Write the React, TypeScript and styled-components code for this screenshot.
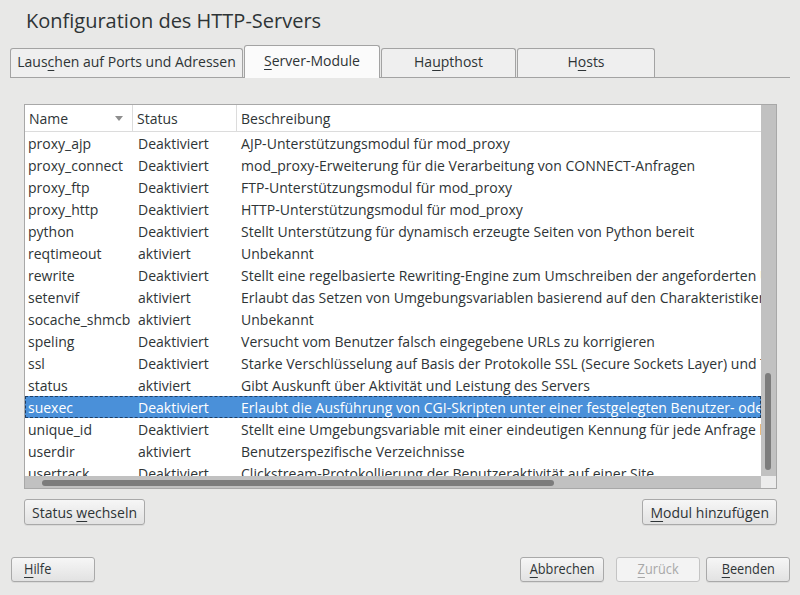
import React from "react";
import styled, { createGlobalStyle } from "styled-components";

const Global = createGlobalStyle`
  html, body { margin: 0; padding: 0; }
  body { font-family: "Open Sans", "Noto Sans", sans-serif; color: #2e3436; }
`;

const Page = styled.div`
  width: 800px;
  height: 595px;
  box-sizing: border-box;
  background: #e8e8e7;
  display: flex;
  flex-direction: column;
  overflow: hidden;
`;

const Title = styled.h1`
  margin: 0;
  padding: 8px 0 0 26px;
  height: 36px;
  box-sizing: border-box;
  font-size: 20px;
  line-height: 26px;
  font-weight: 400;
  color: #2e3436;
`;

const TabBar = styled.div`
  margin: 8px 10px 0 10px;
  height: 33px;
  display: flex;
  align-items: flex-end;
  border-bottom: 1px solid #a3a3a3;
`;

const Tab = styled.div<{ $active?: boolean; $w: number }>`
  width: ${(p) => p.$w}px;
  height: ${(p) => (p.$active ? 33 : 29)}px;
  box-sizing: border-box;
  border: 1px solid #a3a3a3;
  border-bottom: none;
  border-radius: 3px 3px 0 0;
  background: ${(p) => (p.$active ? "#fbfbfb" : "#efefef")};
  margin-bottom: ${(p) => (p.$active ? -1 : 0)}px;
  display: flex;
  align-items: center;
  justify-content: center;
  font-size: 14px;
  color: #2e3436;
  padding-bottom: ${(p) => (p.$active ? 4 : 3)}px;
  white-space: nowrap;
  & + & { margin-left: 1px; }
`;

const Mn = styled.span`
  text-decoration: underline;
  text-underline-offset: 3px;
  text-decoration-thickness: 1px;
`;

const Frame = styled.div`
  margin: 26px 23px 0 24px;
  height: 385px;
  box-sizing: border-box;
  border: 1px solid #a8a8a8;
  background: #ffffff;
  display: grid;
  grid-template-columns: 1fr 15px;
  grid-template-rows: 1fr 12px;
`;

const Viewport = styled.div`
  overflow: hidden;
  position: relative;
`;

const HeaderRow = styled.div`
  display: flex;
  height: 26px;
  border-bottom: 1px solid #dcdcdc;
  background: #fff;
`;

const HeaderCell = styled.div<{ $w?: number }>`
  ${(p) => (p.$w ? `width: ${p.$w}px;` : "flex: 1;")}
  flex-shrink: 0;
  box-sizing: border-box;
  padding-left: 4px;
  padding-right: 8px;
  display: flex;
  align-items: center;
  justify-content: space-between;
  font-size: 14px;
  border-right: ${(p) => (p.$w ? "1px solid #dcdcdc" : "none")};
`;

const SortArrow = styled.span`
  width: 0;
  height: 0;
  border-left: 4px solid transparent;
  border-right: 4px solid transparent;
  border-top: 5px solid #8e8e8e;
  margin-right: 1px;
`;

const Row = styled.div<{ $sel?: boolean }>`
  display: flex;
  height: 22px;
  align-items: center;
  white-space: nowrap;
  font-size: 14px;
  background: ${(p) => (p.$sel ? "#4a90d9" : "transparent")};
  color: ${(p) => (p.$sel ? "#ffffff" : "#2e3436")};
  outline: ${(p) => (p.$sel ? "1px dashed #1d3d63" : "none")};
  outline-offset: -1px;
`;

const Cell = styled.div<{ $w?: number; $pl: number; $ls?: number }>`
  ${(p) => (p.$w ? `width: ${p.$w}px;` : "")}
  flex-shrink: 0;
  box-sizing: border-box;
  padding-left: ${(p) => p.$pl}px;
  letter-spacing: ${(p) => p.$ls ?? 0}px;
`;

const VTrough = styled.div`
  background: #c1c1c1;
  grid-row: 1;
  grid-column: 2;
  position: relative;
`;

const VThumb = styled.div`
  position: absolute;
  left: 4px;
  width: 6px;
  top: 268px;
  height: 97px;
  border-radius: 3px;
  background: #7c7c7c;
`;

const HTrough = styled.div`
  background: #c1c1c1;
  position: relative;
`;

const HThumb = styled.div`
  position: absolute;
  top: 4px;
  height: 6px;
  left: 17px;
  width: 512px;
  border-radius: 3px;
  background: #7c7c7c;
`;

const Corner = styled.div`
  background: #ececec;
`;

const ActionRow = styled.div`
  display: flex;
  justify-content: space-between;
  margin: 10px 23px 0 24px;
`;

const Button = styled.button<{
  $w?: number;
  $h?: number;
  $disabled?: boolean;
  $start?: boolean;
}>`
  ${(p) => (p.$w ? `width: ${p.$w}px;` : "")}
  height: ${(p) => p.$h ?? 26}px;
  box-sizing: border-box;
  padding: ${(p) => (p.$start ? "0 0 0 12px" : "0 7px")};
  border: 1px solid ${(p) => (p.$disabled ? "#c4c4c4" : "#a9a9a9")};
  border-radius: 3px;
  background: ${(p) =>
    p.$disabled ? "#f3f3f3" : "linear-gradient(#f6f6f6, #e2e2e2)"};
  color: ${(p) => (p.$disabled ? "#a8a8a8" : "#2e3436")};
  font-family: "Open Sans", "Noto Sans", sans-serif;
  font-size: 14px;
  display: flex;
  align-items: center;
  justify-content: ${(p) => (p.$start ? "flex-start" : "center")};
  box-shadow: ${(p) => (p.$disabled ? "none" : "0 1px 0 rgba(0,0,0,0.06)")};
`;

const Label = styled.span`
  white-space: pre;
`;

const Narrow = styled.span`
  display: inline-block;
  font-size: 15px;
  line-height: 18px;
  margin-bottom: 3px;
  transform: scaleX(0.85);
  transform-origin: center;
  white-space: nowrap;
`;

const NarrowStart = styled(Narrow)`
  transform-origin: left center;
`;

const Footer = styled.div`
  margin-top: auto;
  padding: 0 10px 13px 11px;
  display: flex;
  align-items: center;
`;

const FooterRight = styled.div`
  margin-left: auto;
  display: flex;
  gap: 6px;
  & > :first-child { margin-right: 6px; }
`;

type Mod = [string, string, string];
const modules: Mod[] = [
  ["proxy_ajp", "Deaktiviert", "AJP-Unterstützungsmodul für mod_proxy"],
  ["proxy_connect", "Deaktiviert", "mod_proxy-Erweiterung für die Verarbeitung von CONNECT-Anfragen"],
  ["proxy_ftp", "Deaktiviert", "FTP-Unterstützungsmodul für mod_proxy"],
  ["proxy_http", "Deaktiviert", "HTTP-Unterstützungsmodul für mod_proxy"],
  ["python", "Deaktiviert", "Stellt Unterstützung für dynamisch erzeugte Seiten von Python bereit"],
  ["reqtimeout", "aktiviert", "Unbekannt"],
  ["rewrite", "Deaktiviert", "Stellt eine regelbasierte Rewriting-Engine zum Umschreiben der angeforderten URLs bereit"],
  ["setenvif", "aktiviert", "Erlaubt das Setzen von Umgebungsvariablen basierend auf den Charakteristiken der Anfrage"],
  ["socache_shmcb", "aktiviert", "Unbekannt"],
  ["speling", "Deaktiviert", "Versucht vom Benutzer falsch eingegebene URLs zu korrigieren"],
  ["ssl", "Deaktiviert", "Starke Verschlüsselung auf Basis der Protokolle SSL (Secure Sockets Layer) und TLS"],
  ["status", "aktiviert", "Gibt Auskunft über Aktivität und Leistung des Servers"],
  ["suexec", "Deaktiviert", "Erlaubt die Ausführung von CGI-Skripten unter einer festgelegten Benutzer- oder Gruppen-ID"],
  ["unique_id", "Deaktiviert", "Stellt eine Umgebungsvariable mit einer eindeutigen Kennung für jede Anfrage bereit"],
  ["userdir", "aktiviert", "Benutzerspezifische Verzeichnisse"],
  ["usertrack", "Deaktiviert", "Clickstream-Protokollierung der Benutzeraktivität auf einer Site"],
];

export default function App() {
  return (
    <Page>
      <Global />
      <Title>Konfiguration des HTTP-Servers</Title>
      <TabBar>
        <Tab $w={233}>
          <Label>
            Laus<Mn>c</Mn>hen auf Ports und Adressen
          </Label>
        </Tab>
        <Tab $w={136} $active>
          <Label>
            <Mn>S</Mn>erver-Module
          </Label>
        </Tab>
        <Tab $w={135}>
          <Label>
            Ha<Mn>u</Mn>pthost
          </Label>
        </Tab>
        <Tab $w={138}>
          <Label>
            H<Mn>o</Mn>sts
          </Label>
        </Tab>
      </TabBar>
      <Frame>
        <Viewport>
          <HeaderRow>
            <HeaderCell $w={108}>
              Name
              <SortArrow />
            </HeaderCell>
            <HeaderCell $w={104}>Status</HeaderCell>
            <HeaderCell>Beschreibung</HeaderCell>
          </HeaderRow>
          {modules.map(([n, s, d]) => (
            <Row key={n} $sel={n === "suexec"}>
              <Cell $w={108} $pl={3}>{n}</Cell>
              <Cell $w={104} $pl={5}>{s}</Cell>
              <Cell $pl={4} $ls={0.03}>{d}</Cell>
            </Row>
          ))}
        </Viewport>
        <VTrough>
          <VThumb />
        </VTrough>
        <HTrough>
          <HThumb />
        </HTrough>
        <Corner />
      </Frame>
      <ActionRow>
        <Button>
          <Label>
            Status <Mn>w</Mn>echseln
          </Label>
        </Button>
        <Button>
          <Label>
            <Mn>M</Mn>odul hinzufügen
          </Label>
        </Button>
      </ActionRow>
      <Footer>
        <Button $w={84} $h={25} $start>
          <NarrowStart>
            <Mn>H</Mn>ilfe
          </NarrowStart>
        </Button>
        <FooterRight>
          <Button $w={84} $h={25}>
            <Narrow>
              <Mn>A</Mn>bbrechen
            </Narrow>
          </Button>
          <Button $w={84} $h={25} $disabled>
            <Narrow>
              <Mn>Z</Mn>urück
            </Narrow>
          </Button>
          <Button $w={84} $h={25}>
            <Narrow>
              <Mn>B</Mn>eenden
            </Narrow>
          </Button>
        </FooterRight>
      </Footer>
    </Page>
  );
}
